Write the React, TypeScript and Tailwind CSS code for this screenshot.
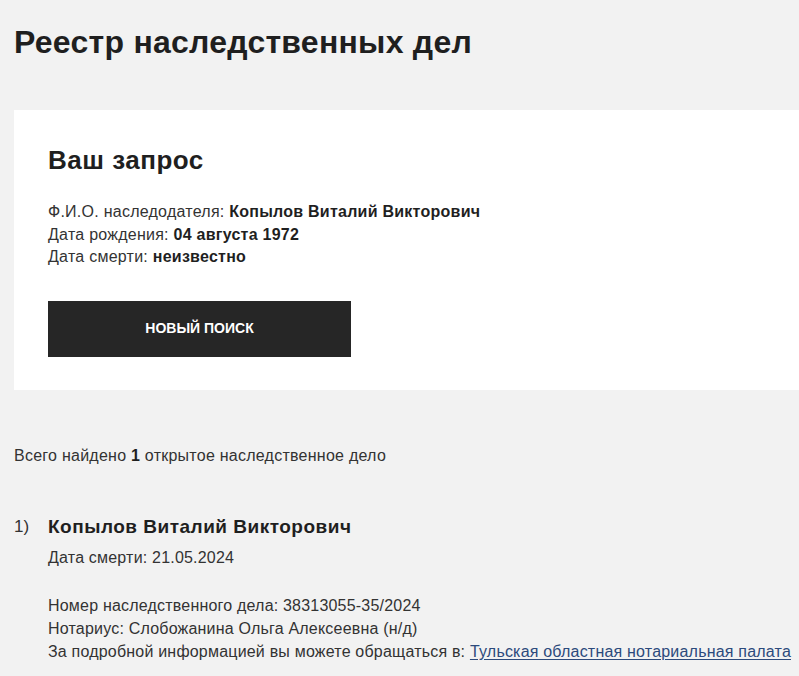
import React from "react";

export default function App() {
  return (
    <div className="min-h-screen bg-[#f2f2f2] text-[#222] font-['Liberation_Sans',Arial,sans-serif] overflow-hidden">
      <h1 className="pl-[14px] pt-[22px] text-[32px] leading-[40px] font-bold tracking-[0.25px] text-[#1f1f1f]">
        Реестр наследственных дел
      </h1>
      <div className="ml-[14px] mt-[48px] bg-white pl-[34px] pt-[34px] h-[280px]">
        <h2 className="text-[26px] leading-[32px] font-bold tracking-[0.5px] text-[#1f1f1f]">Ваш запрос</h2>
        <div className="mt-[25px] text-[16px] leading-[22.5px] tracking-[0.25px] text-[#333]">
          <div>
            Ф.И.О. наследодателя: <b className="text-[#1f1f1f]">Копылов Виталий Викторович</b>
          </div>
          <div>
            Дата рождения: <b className="text-[#1f1f1f]">04 августа 1972</b>
          </div>
          <div>
            Дата смерти: <b className="text-[#1f1f1f]">неизвестно</b>
          </div>
        </div>
        <button className="mt-[32px] flex h-[56px] w-[303px] items-center justify-center bg-[#262626] text-[14px] font-bold text-white">
          НОВЫЙ ПОИСК
        </button>
      </div>
      <p className="mt-[55px] pl-[14px] text-[16px] leading-[22px] tracking-[0.25px] text-[#333]">
        Всего найдено <b className="text-[#1f1f1f]">1</b> открытое наследственное дело
      </p>
      <div className="mt-[47px] flex pl-[14px]">
        <div className="w-[34px] text-[17px] leading-[26px] text-[#333]">1)</div>
        <div>
          <div className="text-[19px] leading-[26px] font-bold tracking-[0.5px] text-[#1f1f1f]">Копылов Виталий Викторович</div>
          <div className="mt-[7px] text-[16px] leading-[22.5px] tracking-[0.2px] text-[#333]">Дата смерти: 21.05.2024</div>
          <div className="mt-[24px] text-[16px] leading-[23px] tracking-[0.2px] text-[#333]">
            <div>Номер наследственного дела: 38313055-35/2024</div>
            <div>Нотариус: Слобожанина Ольга Алексеевна (н/д)</div>
            <div>
              За подробной информацией вы можете обращаться в:{" "}
              <a href="#" className="text-[#2c4a7c] underline underline-offset-2">
                Тульская областная нотариальная палата
              </a>
            </div>
          </div>
        </div>
      </div>
    </div>
  );
}
